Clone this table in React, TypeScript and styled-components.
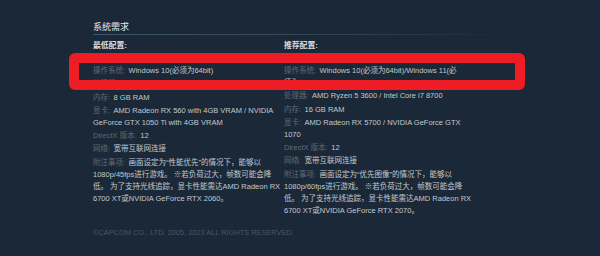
import React from 'react';
import styled, {createGlobalStyle} from 'styled-components';

const GlobalStyle = createGlobalStyle`
  html, body {
    margin: 0;
    padding: 0;
    background: #1b2838;
  }
  body {
    font-family: "Liberation Sans", Arial, "Noto Sans CJK SC", sans-serif;
  }
`;

const Page = styled.div`
  position: relative;
  width: 600px;
  height: 256px;
  overflow: hidden;
  background: #1b2838;
`;

const Section = styled.div`
  width: 422px;
  padding: 21px 0 0 93px;
`;

const Title = styled.h2`
  margin: 0;
  font-size: 9px;
  line-height: 12px;
  font-weight: normal;
  color: #e4e7ea;
`;

const Rule = styled.div`
  height: 1px;
  margin-top: 1px;
  background: linear-gradient(to right, #3d566b 0%, #2e4356 60%, rgba(27, 40, 56, 0) 100%);
`;

const Columns = styled.div`
  display: grid;
  grid-template-columns: 187px 187px;
  column-gap: 4px;
  margin-top: 5px;
`;

const ColHead = styled.div`
  font-size: 7.8px;
  line-height: 12px;
  font-weight: bold;
  color: #d9dee2;
  margin-bottom: 13px;
`;

const List = styled.ul`
  list-style: none;
  margin: 0;
  padding: 0;
`;

const Item = styled.li`
  font-size: 7.5px;
  line-height: 12px;
  margin-bottom: 1.3px;
  color: #c2c8cd;
  white-space: nowrap;
`;

const Label = styled.span`
  color: #5f6b76;
  margin-right: 3.5px;
`;

const Footer = styled.div`
  margin-top: 9px;
  font-size: 7.4px;
  line-height: 12px;
  color: #4a5764;
`;

const Highlight = styled.div`
  position: absolute;
  left: 69px;
  top: 53px;
  width: 456px;
  height: 37px;
  box-sizing: border-box;
  border: 10px solid #ee1c25;
  border-radius: 6px;
`;

// each value is kept as the lines it shows in the store page
type Req = {label: string; lines: string[]};

const minimum: Req[] = [
    {label: '操作系统', lines: ['Windows 10(必须为64bit)']},
    {label: '处理器', lines: ['AMD Ryzen 3 1200 / Intel Core i5-7500']},
    {label: '内存', lines: ['8 GB RAM']},
    {label: '显卡', lines: ['AMD Radeon RX 560 with 4GB VRAM / NVIDIA', 'GeForce GTX 1050 Ti with 4GB VRAM']},
    {label: 'DirectX 版本', lines: ['12']},
    {label: '网络', lines: ['宽带互联网连接']},
    {
        label: '附注事项',
        lines: [
            '画面设定为“性能优先”的情况下，能够以',
            '1080p/45fps进行游戏。 ※若负荷过大，帧数可能会降',
            '低。 为了支持光线追踪，显卡性能需达AMD Radeon RX',
            '6700 XT或NVIDIA GeForce RTX 2060。',
        ]
    },
];

const recommended: Req[] = [
    {label: '操作系统', lines: ['Windows 10(必须为64bit)/Windows 11(必', '须为64bit)']},
    {label: '处理器', lines: ['AMD Ryzen 5 3600 / Intel Core i7 8700']},
    {label: '内存', lines: ['16 GB RAM']},
    {label: '显卡', lines: ['AMD Radeon RX 5700 / NVIDIA GeForce GTX', '1070']},
    {label: 'DirectX 版本', lines: ['12']},
    {label: '网络', lines: ['宽带互联网连接']},
    {
        label: '附注事项',
        lines: [
            '画面设定为“优先图像”的情况下，能够以',
            '1080p/60fps进行游戏。 ※若负荷过大，帧数可能会降',
            '低。 为了支持光线追踪，显卡性能需达AMD Radeon RX',
            '6700 XT或NVIDIA GeForce RTX 2070。',
        ]
    },
];

const ReqColumn = ({heading, items}: {heading: string; items: Req[]}) => (
    <div>
        <ColHead>{heading}</ColHead>
        <List>
            {items.map((r) => (
                <Item key={r.label}>
                    <Label>{r.label}:</Label>
                    {r.lines.map((l, i) => (
                        <React.Fragment key={i}>
                            {i > 0 && <br/>}
                            {l}
                        </React.Fragment>
                    ))}
                </Item>
            ))}
        </List>
    </div>
);

export default function App() {
    return (
        <Page>
            <GlobalStyle/>
            <Section>
                <Title>系统需求</Title>
                <Rule/>
                <Columns>
                    <ReqColumn heading="最低配置:" items={minimum}/>
                    <ReqColumn heading="推荐配置:" items={recommended}/>
                </Columns>
                <Footer>©CAPCOM CO., LTD. 2005, 2023 ALL RIGHTS RESERVED.</Footer>
            </Section>
            {/* annotation drawn over the OS row */}
            <Highlight/>
        </Page>
    );
}
